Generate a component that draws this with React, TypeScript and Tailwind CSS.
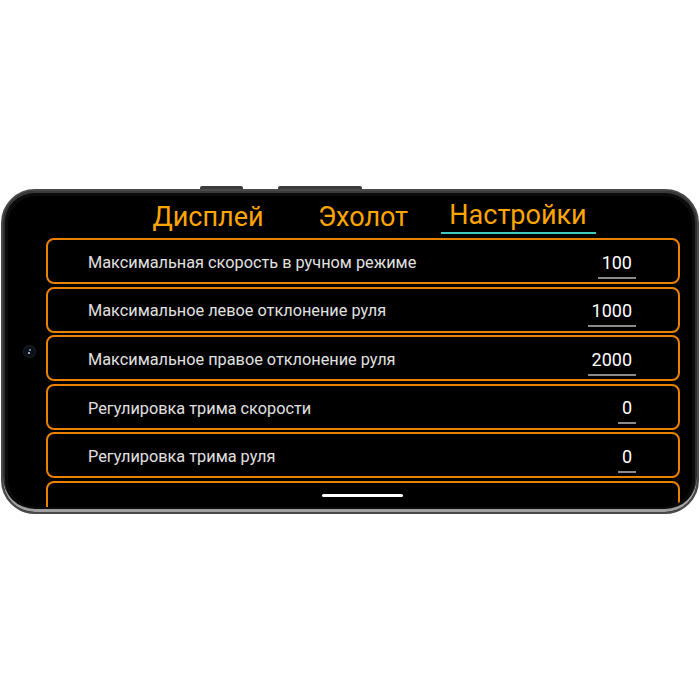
const TABS = ['Дисплей', 'Эхолот', 'Настройки'];

const ROWS: { label: string; value: string }[] = [
  { label: 'Максимальная скорость в ручном режиме', value: '100' },
  { label: 'Максимальное левое отклонение руля', value: '1000' },
  { label: 'Максимальное правое отклонение руля', value: '2000' },
  { label: 'Регулировка трима скорости', value: '0' },
  { label: 'Регулировка трима руля', value: '0' },
  { label: '', value: '' },
];

export default function App() {
  const active = 2;

  return (
    <div className="w-[700px] h-[700px] bg-white overflow-hidden font-['Roboto',sans-serif]">
      <div className="pt-[186px]">
        {/* side buttons */}
        <div className="flex h-[3px]">
          <div className="ml-[200px] w-[43px] bg-[#3c3c3c] rounded-t-[2px]" />
          <div className="ml-[35px] w-[84px] bg-[#3c3c3c] rounded-t-[2px]" />
        </div>

        {/* phone body */}
        <div className="mx-[1px] h-[325px] rounded-[34px] bg-[#0b0b0b] border-2 border-[#4a4a4a] p-[5px] shadow-[inset_0_-3px_0_#a0a0a0,inset_0_2px_0_#3a3a3a,inset_2px_0_0_#2e2e2e,inset_-2px_0_0_#2e2e2e]">
          <div className="relative h-full rounded-[28px] bg-black overflow-hidden pl-[38px] pr-[12px] flex flex-col">
            {/* camera */}
            <div className="absolute left-[16px] top-[150px] w-[11px] h-[11px] rounded-full bg-[#0d1018] shadow-[0_0_0_1px_#1c1f26]">
              <div className="ml-[5px] mt-[3px] w-[2px] h-[2px] rounded-full bg-[#6fa6c8]" />
              <div className="ml-[4px] mt-[1px] w-[2px] h-[2px] rounded-full bg-[#c8d8e0]" />
            </div>

            {/* tabs */}
            <div className="flex justify-center h-[38px] shrink-0">
              {TABS.map((t, i) => (
                <div key={t}
                  className={`w-[155px] flex items-end justify-center pb-[1px] text-[27px] leading-[32px] text-[#ffa500]
                    ${i === active ? 'border-b-2 border-[#3ec9c1]' : ''}`}>
                  {t}
                </div>
              ))}
            </div>

            {/* settings list */}
            <div className="mt-[4px] flex flex-col gap-[2.6px]">
              {ROWS.map((r, i) => (
                <div key={i}
                  className="h-[46px] shrink-0 rounded-[8px] border-2 border-[#e98200] flex items-center justify-between pl-[40px] pr-[42px]">
                  <span className="mt-[4px] text-[16.3px] text-[#e0e0e0]">{r.label}</span>
                  {r.value && (
                    <span className="mt-[8px] px-[4px] pb-[3px] border-b-2 border-[#8a8a8a] text-[18px] leading-[22px] text-white">
                      {r.value}
                    </span>
                  )}
                </div>
              ))}
            </div>

            {/* home indicator */}
            <div className="absolute left-[314px] bottom-[10px] w-[81px] h-[3px] rounded-full bg-white" />
          </div>
        </div>
      </div>
    </div>
  );
}
